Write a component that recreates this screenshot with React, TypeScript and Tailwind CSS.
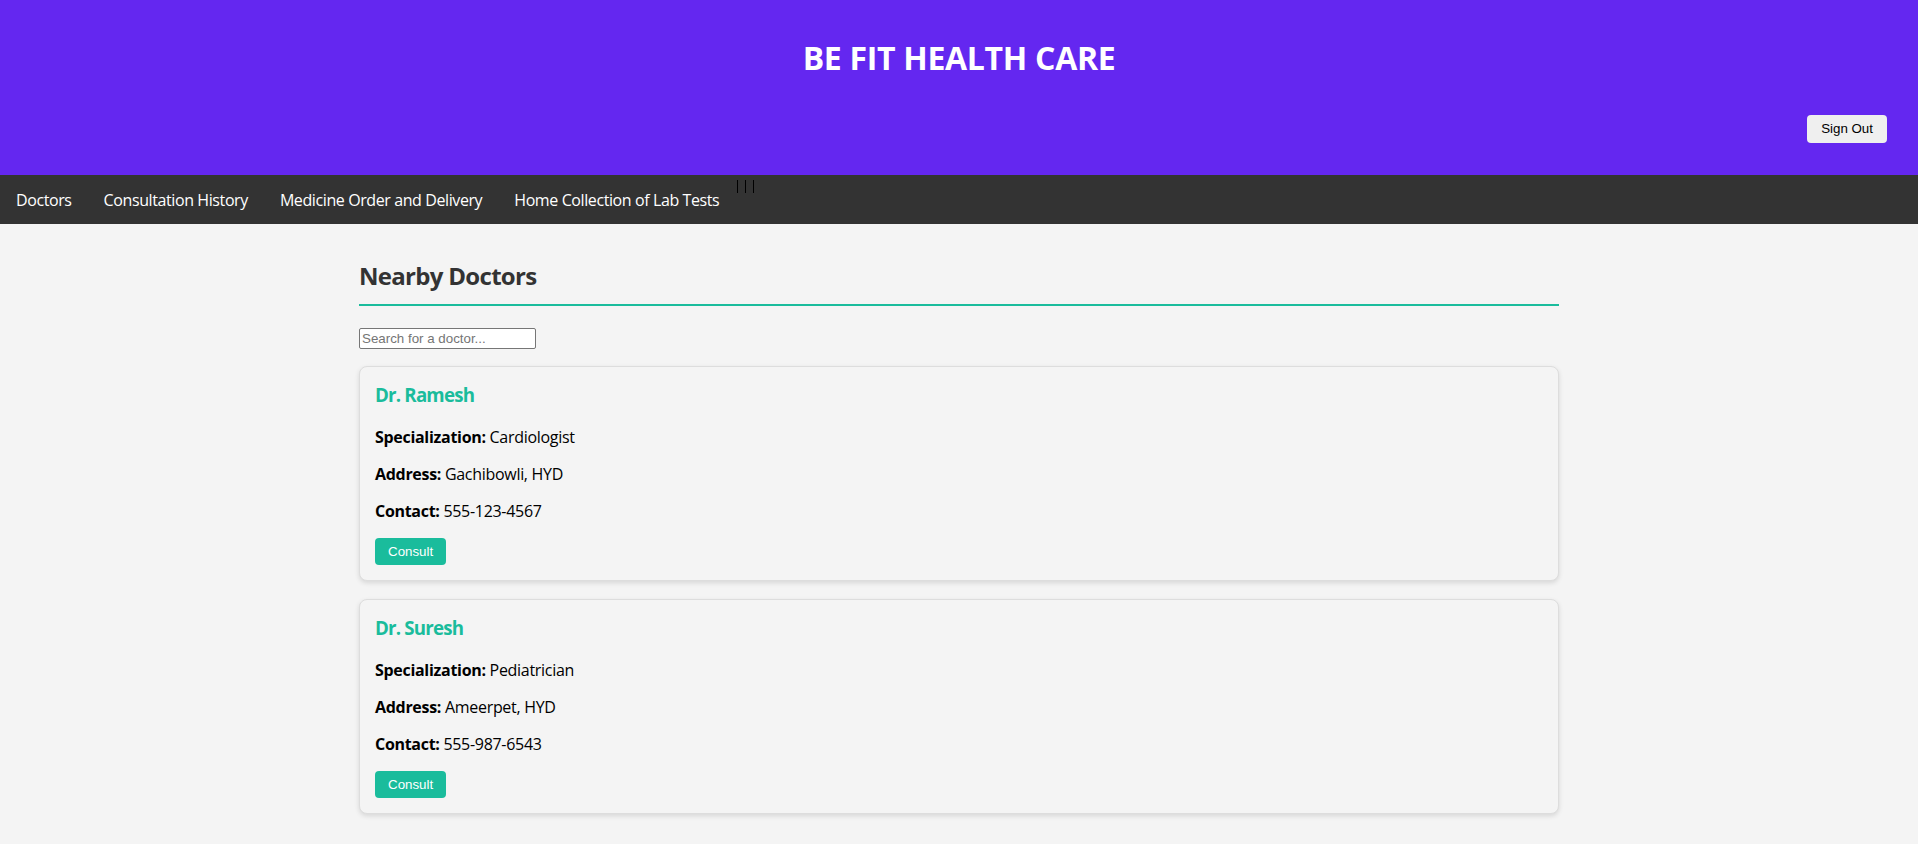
const doctors = [
  { name: "Dr. Ramesh", specialization: "Cardiologist", address: "Gachibowli, HYD", contact: "555-123-4567" },
  { name: "Dr. Suresh", specialization: "Pediatrician", address: "Ameerpet, HYD", contact: "555-987-6543" },
];

const navLinks = ["Doctors", "Consultation History", "Medicine Order and Delivery", "Home Collection of Lab Tests"];

export default function App() {
  return (
    <div className="min-h-screen bg-[#f4f4f4] font-['Open_Sans',sans-serif]">
      {/* Header */}
      <header className="h-[175px] bg-[#6427f0]">
        <h1 className="pt-[36px] text-center text-[32px] font-bold leading-[44px] tracking-[-0.3px] text-white">BE FIT HEALTH CARE</h1>
        <div className="mt-[35px] flex justify-end pr-[31px]">
          <button className="h-[28px] rounded-[4px] bg-[#efefef] px-[14px] font-['Liberation_Sans',Arial,sans-serif] text-[13.33px] text-black">
            Sign Out
          </button>
        </div>
      </header>

      {/* Nav bar */}
      <nav className="flex h-[49px] bg-[#333]">
        <ul className="flex items-center">
          {navLinks.map((link) => (
            <li key={link} className="px-4 text-[16px] leading-[22px] tracking-[-0.4px] text-white">
              {link}
            </li>
          ))}
        </ul>
        <div className="ml-[2px] mt-[5px] flex gap-[7px]">
          <span className="h-[13px] w-px bg-black"></span>
          <span className="h-[13px] w-px bg-black"></span>
          <span className="h-[13px] w-px bg-black"></span>
        </div>
      </nav>

      {/* Doctors list */}
      <main className="mx-auto w-[1200px] pt-[36px] pb-[30px]">
        <h2 className="border-b-2 border-[#1abc9c] pb-[12px] text-[24px] font-bold leading-[32px] tracking-[-0.7px] text-[#333]">
          Nearby Doctors
        </h2>
        <input
          type="text"
          placeholder="Search for a doctor..."
          className="mt-[22px] h-[21px] w-[177px] rounded-[2px] border border-[#767676] bg-white px-[2px] font-['Liberation_Sans',Arial,sans-serif] text-[13.33px] text-black placeholder:text-[#757575]"
        />

        <div className="mt-[17px] flex flex-col gap-[18px]">
          {doctors.map((doc) => (
            <div
              key={doc.name}
              className="rounded-[8px] border border-[#ddd] bg-[#f4f4f4] p-[15px] shadow-[0_2px_5px_rgba(0,0,0,0.12)]"
            >
              <h3 className="text-[18.72px] font-bold leading-[26px] tracking-[-0.8px] text-[#1abc9c]">{doc.name}</h3>
              <p className="mt-[19px] text-[16px] leading-[21px] tracking-[-0.3px] text-black">
                <strong>Specialization:</strong> {doc.specialization}
              </p>
              <p className="mt-[16px] text-[16px] leading-[21px] tracking-[-0.3px] text-black">
                <strong>Address:</strong> {doc.address}
              </p>
              <p className="mt-[16px] text-[16px] leading-[21px] tracking-[-0.3px] text-black">
                <strong>Contact:</strong> {doc.contact}
              </p>
              <button className="mt-[16px] h-[27px] rounded-[4px] bg-[#1abc9c] px-[13px] font-['Liberation_Sans',Arial,sans-serif] text-[13.33px] text-white">
                Consult
              </button>
            </div>
          ))}
        </div>
      </main>
    </div>
  );
}
